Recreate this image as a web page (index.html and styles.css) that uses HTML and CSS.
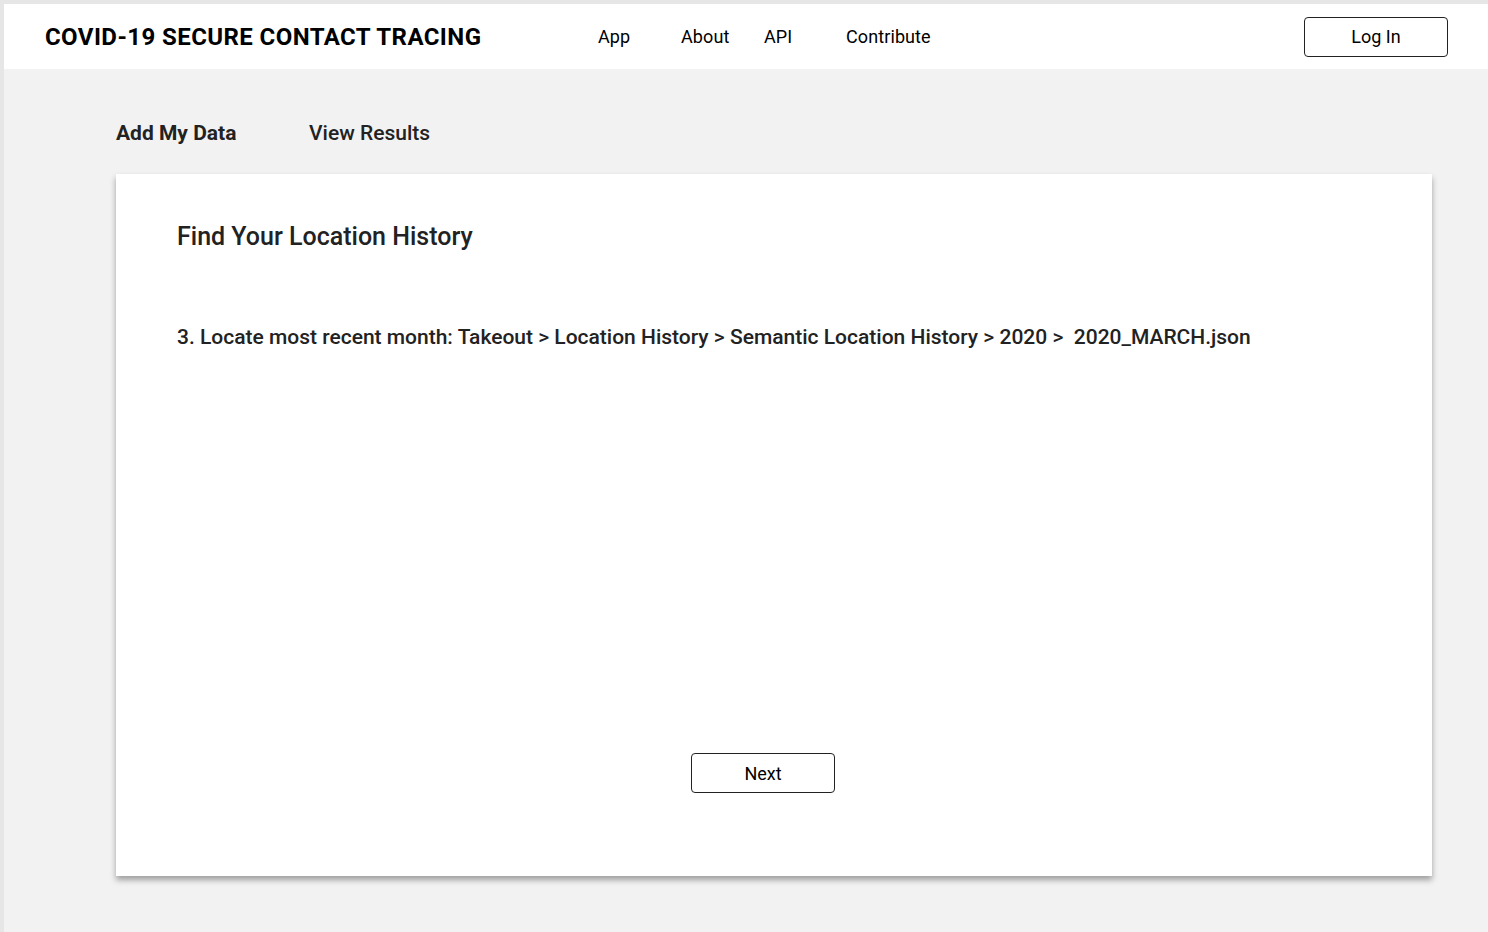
FILE: index.html
```html
<!DOCTYPE html>
<html lang="en">
<head>
<meta charset="utf-8">
<title>COVID-19 Secure Contact Tracing</title>
<link rel="stylesheet" href="styles.css">
</head>
<body>
<div class="frame">
  <header class="topbar">
    <div class="brand">COVID-19 SECURE CONTACT TRACING</div>
    <nav class="nav">
      <a class="nav-app">App</a>
      <a class="nav-about">About</a>
      <a class="nav-api">API</a>
      <a class="nav-contrib">Contribute</a>
    </nav>
    <button class="btn login">Log In</button>
  </header>
  <main class="main">
    <div class="tabs">
      <a class="tab active">Add My Data</a>
      <a class="tab">View Results</a>
    </div>
    <section class="card">
      <h1 class="card-title">Find Your Location History</h1>
      <p class="step">3. Locate most recent month: Takeout &gt; Location History &gt; Semantic Location History &gt; 2020 &gt;&nbsp; 2020_MARCH.json</p>
      <div class="actions">
        <button class="btn next">Next</button>
      </div>
    </section>
  </main>
</div>
</body>
</html>
```
FILE: styles.css
```css
html, body {
  margin: 0;
  padding: 0;
}
body {
  background: #e6e6e6;
  font-family: Roboto, "Noto Sans", sans-serif;
  color: #222;
  width: 1488px;
  height: 932px;
  overflow: hidden;
}
.frame {
  margin: 4px 0 0 4px;
  background: #f2f2f2;
  height: 928px;
}
.topbar {
  height: 65px;
  background: #fff;
  display: flex;
  align-items: center;
  padding: 0 0 0 41px;
  box-sizing: border-box;
}
.brand {
  font-size: 24px;
  font-weight: 700;
  color: #000;
  letter-spacing: 0.42px;
  width: 553px;
}
.nav {
  display: flex;
  font-size: 18px;
  color: #000;
  letter-spacing: 0.1px;
}
.nav a { display: block; }
.nav-app { width: 83px; }
.nav-about { width: 83px; }
.nav-api { width: 82px; }
.btn {
  font-family: Roboto, "Noto Sans", sans-serif;
  font-size: 18px;
  color: #000;
  background: #fff;
  border: 1px solid #222;
  border-radius: 4px;
  width: 144px;
  height: 40px;
  padding: 0;
  cursor: pointer;
}
.login {
  margin-left: auto;
  margin-right: 40px;
}
.main {
  padding: 0 56px 0 112px;
}
.tabs {
  display: flex;
  height: 105px;
  align-items: center;
  padding-top: 23px;
  box-sizing: border-box;
  font-size: 21px;
  color: #222;
}
.tab {
  font-weight: 500;
}
.tab.active {
  font-weight: 700;
  width: 193px;
}
.card {
  background: #fff;
  height: 702px;
  box-shadow: 0 4px 6px rgba(0, 0, 0, 0.35);
  padding: 48px 61px 0;
  box-sizing: border-box;
  display: flex;
  flex-direction: column;
}
.card-title {
  margin: 0;
  font-size: 25px;
  font-weight: 500;
  line-height: 30px;
  color: #222;
}
.step {
  margin: 73px 0 0;
  font-size: 21px;
  line-height: 25px;
  font-weight: 500;
  color: #222;
}
.actions {
  margin-top: auto;
  margin-bottom: 83px;
  display: flex;
  justify-content: center;
}
.next {
  margin-right: 22px;
}
```
